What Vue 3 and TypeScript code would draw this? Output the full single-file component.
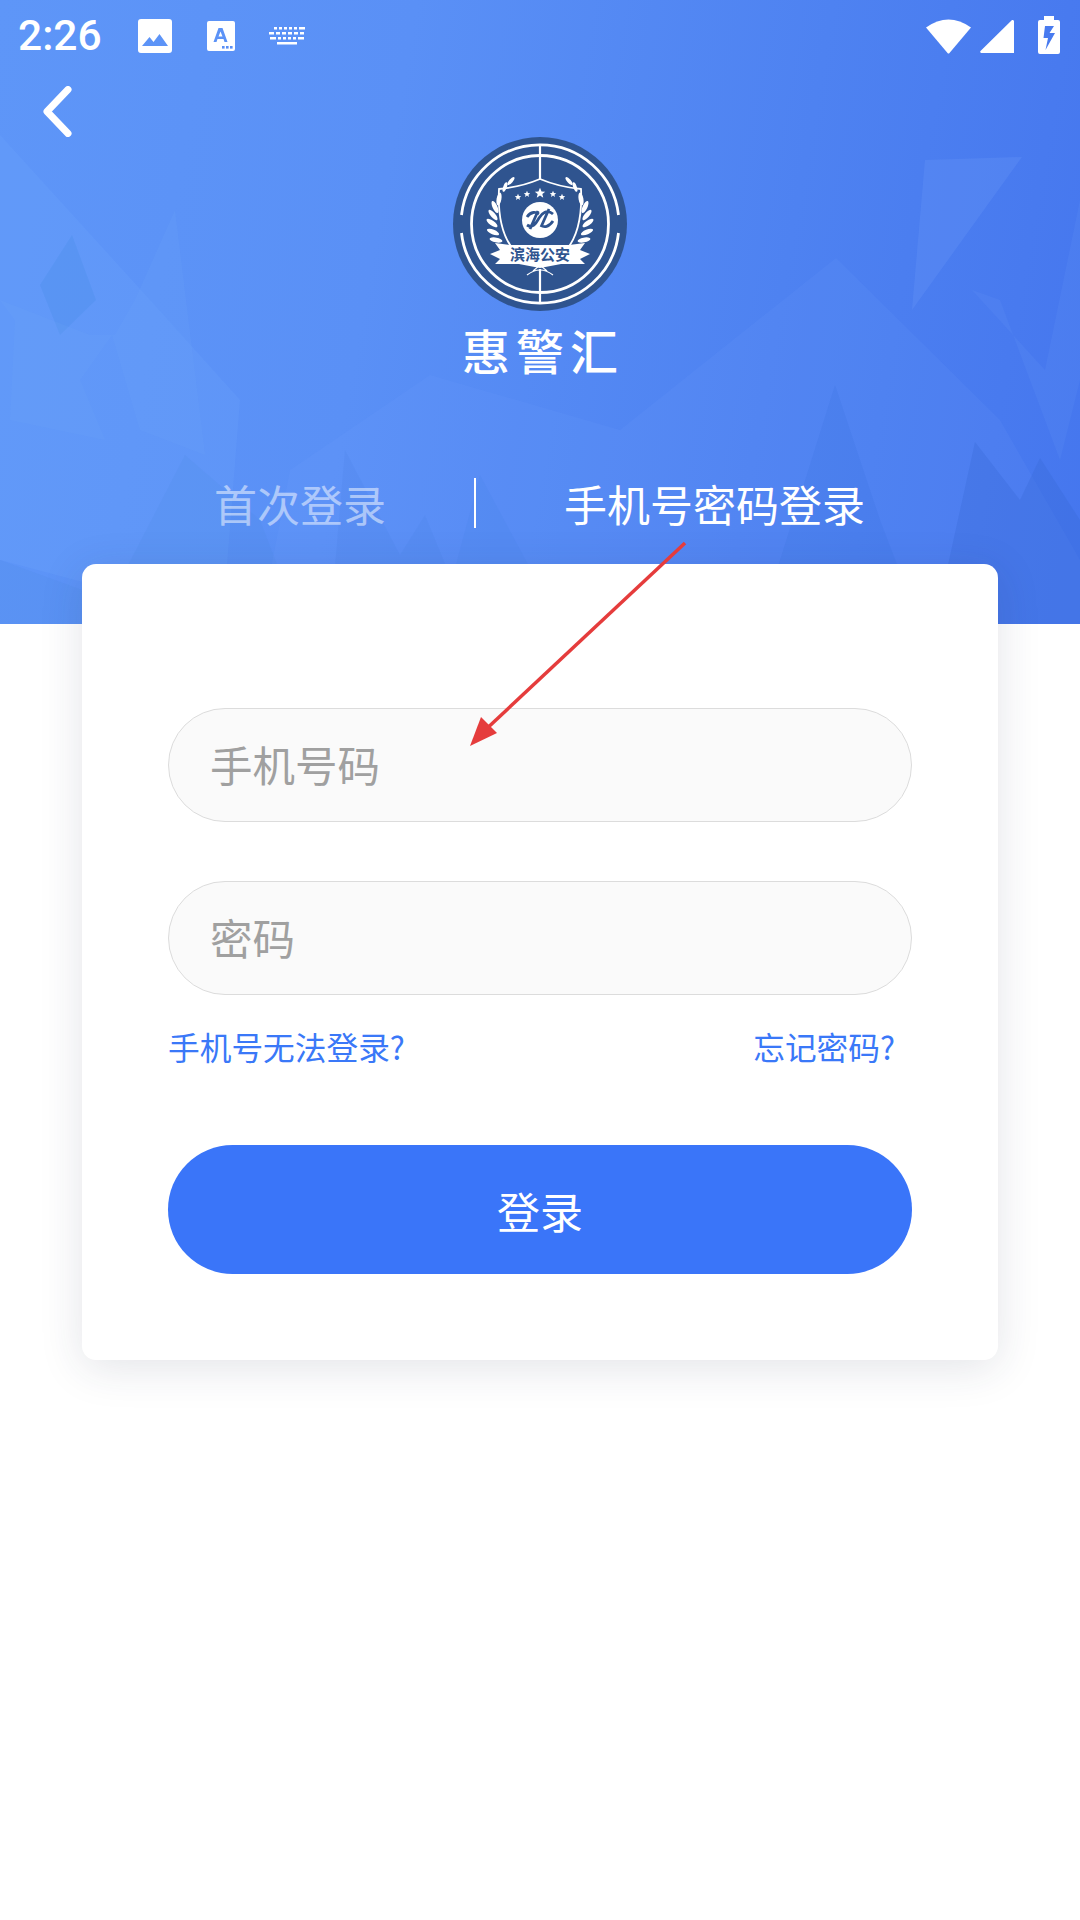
<script setup lang="ts">
interface Shard {
  points: string;
  fill: string;
}

// background shards of the header, in page pixels
const shards: Shard[] = [
  { points: "0,135 150,300 240,400 225,590 150,600 0,560", fill: "rgba(120,175,255,.16)" },
  { points: "40,285 72,235 96,300 60,335", fill: "rgba(70,140,230,.28)" },
  { points: "0,300 15,320 10,420 105,440 80,380 112,335 140,430 205,455 175,210 135,300 115,335 90,335", fill: "rgba(110,170,250,.14)" },
  { points: "185,455 260,520 300,624 0,624 0,560 110,600", fill: "rgba(75,140,230,.18)" },
  { points: "260,624 290,470 430,375 620,430 836,258 1000,420 1080,560 1080,624", fill: "rgba(115,165,255,.11)" },
  { points: "925,160 1022,157 912,310", fill: "rgba(130,175,255,.16)" },
  { points: "972,290 1045,370 1080,200 1080,380 1060,460 1000,300", fill: "rgba(130,175,255,.09)" },
  { points: "760,624 835,385 880,520 920,624", fill: "rgba(60,115,225,.22)" },
  { points: "935,624 975,442 1020,500 1040,458 1080,520 1080,624", fill: "rgba(55,105,215,.32)" },
  { points: "330,624 345,450 400,555 425,515 470,624", fill: "rgba(70,130,225,.18)" },
  { points: "480,475 560,624 440,624", fill: "rgba(70,125,225,.15)" }
];

const leaves = [
  { x: 46, y: 62, r: 100 },
  { x: 42, y: 70, r: 65 },
  { x: 40, y: 78, r: 50 },
  { x: 39, y: 86, r: 35 },
  { x: 40, y: 95, r: 22 },
  { x: 43, y: 103, r: 10 }
];

const stars = [
  { x: 65, y: 60, s: 0.8 },
  { x: 74, y: 57, s: 0.8 },
  { x: 87, y: 56, s: 1.3 },
  { x: 100, y: 57, s: 0.8 },
  { x: 109, y: 60, s: 0.8 }
];
</script>

<template>
  <div class="page">
    <header class="hero">
      <svg class="shards" viewBox="0 0 1080 624" preserveAspectRatio="none">
        <polygon v-for="(s, i) in shards" :key="i" :points="s.points" :fill="s.fill" />
      </svg>

      <div class="status">
        <span class="time">2:26</span>
        <svg class="ic-image" viewBox="0 0 34 34">
          <path fill="#fff" fill-rule="evenodd" d="M3 0h28a3 3 0 0 1 3 3v28a3 3 0 0 1-3 3H3a3 3 0 0 1-3-3V3a3 3 0 0 1 3-3zM4 27h26l-8.500-12-6 8-4-5z" />
        </svg>
        <svg class="ic-font" viewBox="0 0 28 30">
          <path fill="#fff" fill-rule="evenodd" d="M2 0h24a2 2 0 0 1 2 2v26a2 2 0 0 1-2 2H2a2 2 0 0 1-2-2V2a2 2 0 0 1 2-2zM11.500 7 6.500 21h3l1-3h6l1 3h3L15.500 7zM13.500 10.500l2 5h-4z" />
          <rect x="15" y="25" width="2.600" height="2.600" fill="#5a8ff5" />
          <rect x="19" y="25" width="2.600" height="2.600" fill="#5a8ff5" />
          <rect x="23" y="25" width="2.600" height="2.600" fill="#5a8ff5" />
        </svg>
        <svg class="ic-keys" viewBox="0 0 36 18" fill="#fff">
          <rect x="5" y="0" width="3" height="2.500" />
          <rect x="10" y="0" width="3" height="2.500" />
          <rect x="15" y="0" width="3" height="2.500" />
          <rect x="20" y="0" width="3" height="2.500" />
          <rect x="25" y="0" width="3" height="2.500" />
          <rect x="30" y="0" width="6" height="2.500" />
          <rect x="0" y="5" width="5" height="2.500" />
          <rect x="7" y="5" width="4" height="2.500" />
          <rect x="13" y="5" width="4" height="2.500" />
          <rect x="19" y="5" width="4" height="2.500" />
          <rect x="25" y="5" width="4" height="2.500" />
          <rect x="31" y="5" width="4" height="2.500" />
          <rect x="1" y="10" width="6" height="2.500" />
          <rect x="9" y="10" width="3" height="2.500" />
          <rect x="14" y="10" width="3" height="2.500" />
          <rect x="19" y="10" width="3" height="2.500" />
          <rect x="24" y="10" width="3" height="2.500" />
          <rect x="29" y="10" width="6" height="2.500" />
          <rect x="8" y="15" width="20" height="2.500" />
        </svg>
        <span class="status-gap"></span>
        <svg class="ic-wifi" viewBox="0 0 45 36">
          <path fill="#fff" d="M0 9.500Q22.500-6.500 45 9.500L23.500 35a1.400 1.400 0 0 1-2 0z" />
        </svg>
        <svg class="ic-signal" viewBox="0 0 34 33">
          <path fill="#fff" d="M32 0a1.500 1.500 0 0 1 2 1.500V33H1.500a1.200 1.200 0 0 1-1-2z" />
        </svg>
        <svg class="ic-battery" viewBox="0 0 22 38">
          <path fill="#fff" fill-rule="evenodd" d="M6 0h10v4h4a2 2 0 0 1 2 2v30a2 2 0 0 1-2 2H2a2 2 0 0 1-2-2V6a2 2 0 0 1 2-2h4zM7 10 5.500 22H10L7.500 34 17 17h-5.500L16 10z" />
        </svg>
      </div>

      <svg class="back" viewBox="0 0 29 51">
        <path d="M25 3.500 4 25.500 25 47.500" fill="none" stroke="#fff" stroke-width="7" stroke-linecap="round" stroke-linejoin="round" />
      </svg>

      <div class="brand">
        <svg class="logo" viewBox="0 0 174 174">
          <circle cx="87" cy="87" r="87" fill="#2f548f" />
          <g fill="none" stroke="#fff">
            <path stroke-width="2.800" d="M8.500 78A79 79 0 0 1 165.500 78M8.500 96A79 79 0 0 0 165.500 96" />
            <circle cx="87" cy="87" r="68.500" stroke-width="2.800" />
            <path stroke-width="2.200" d="M87 9V42M87 132V165" />
            <path stroke-width="1.800" d="M87 42Q68 50 46 52Q44 92 60 112M87 42Q106 50 128 52Q130 92 114 112" />
          </g>
          <g fill="#fff">
            <ellipse
              v-for="(l, i) in leaves"
              :key="'l' + i"
              :cx="l.x"
              :cy="l.y"
              rx="6.500"
              ry="2.400"
              :transform="`rotate(${l.r} ${l.x} ${l.y})`"
            />
            <ellipse
              v-for="(l, i) in leaves"
              :key="'r' + i"
              :cx="174 - l.x"
              :cy="l.y"
              rx="6.500"
              ry="2.400"
              :transform="`rotate(${-l.r} ${174 - l.x} ${l.y})`"
            />
            <ellipse cx="58" cy="44" rx="5" ry="1.800" transform="rotate(-50 58 44)" />
            <ellipse cx="116" cy="44" rx="5" ry="1.800" transform="rotate(50 116 44)" />
            <ellipse cx="52" cy="50" rx="5" ry="1.800" transform="rotate(-70 52 50)" />
            <ellipse cx="122" cy="50" rx="5" ry="1.800" transform="rotate(70 122 50)" />
            <path
              v-for="(s, i) in stars"
              :key="'s' + i"
              :transform="`translate(${s.x} ${s.y}) scale(${s.s})`"
              d="M0-4 1.200-1.200 4-1 1.800.8 2.500 3.600 0 2 -2.500 3.600-1.800.8-4-1-1.200-1.200z"
            />
            <path d="M42 106 58 108H116L132 106 127 113 137 117 127 122 132 127 108 127 87 131 66 127 42 127 47 122 37 117 47 113z" />
            <circle cx="87" cy="83" r="18" />
          </g>
          <path d="M74 88c6 4 9-2 12-7s8-9 14-4M74 80c4-6 9-5 12-3M88 88c3 3 8 2 12-4M85 74l-8 18M96 72l-8 18" fill="none" stroke="#2f548f" stroke-width="2.800" />
          <text x="87" y="123" class="logo-text" text-anchor="middle">滨海公安</text>
          <path d="M74 138Q87 128 100 138M80 134 87 128 94 134" fill="none" stroke="#fff" stroke-width="1.200" />
        </svg>
        <div class="brand-name">惠警汇</div>
      </div>

      <div class="tabs">
        <span class="tab tab-off">首次登录</span>
        <span class="tab-line"></span>
        <span class="tab">手机号密码登录</span>
      </div>
    </header>

    <main class="card">
      <div class="field">手机号码</div>
      <div class="field">密码</div>
      <div class="links">
        <span>手机号无法登录?</span>
        <span>忘记密码?</span>
      </div>
      <button class="submit" type="button">登录</button>
    </main>

    <!-- annotation drawn over the screenshot -->
    <svg class="arrow" viewBox="0 0 1080 1920">
      <line x1="685" y1="543" x2="482" y2="733" stroke="#e53c3c" stroke-width="3.500" />
      <polygon points="470,746 481,717 497,733" fill="#e53c3c" />
    </svg>
  </div>
</template>

<style scoped>
.page {
  position: relative;
  width: 1080px;
  height: 1920px;
  overflow: hidden;
  background: #fff;
  font-family: "Noto Sans CJK SC", "Noto Sans", sans-serif;
}

.hero {
  position: relative;
  height: 624px;
  display: flex;
  flex-direction: column;
  background: linear-gradient(100deg, #5e96f8 0%, #5a90f6 35%, #4e82f1 70%, #4576ee 100%);
}

.shards {
  position: absolute;
  inset: 0;
  width: 100%;
  height: 100%;
}

.status {
  position: relative;
  display: flex;
  align-items: center;
  height: 72px;
  padding: 0 20px 0 18px;
  color: #fff;
}

.status svg {
  flex: none;
}

.time {
  width: 84px;
  margin-right: 36px;
  font-family: Roboto, sans-serif;
  font-size: 42.500px;
  font-weight: 500;
  line-height: 72px;
}

.ic-image {
  width: 34px;
  height: 34px;
  margin-right: 35px;
}

.ic-font {
  width: 28px;
  height: 30px;
  margin-right: 34px;
}

.ic-keys {
  width: 36px;
  height: 18px;
}

.status-gap {
  flex: 1;
}

.ic-wifi {
  width: 45px;
  height: 36px;
  margin-right: 9px;
}

.ic-signal {
  width: 34px;
  height: 33px;
  margin: 1px 24px 0 0;
}

.ic-battery {
  width: 22px;
  height: 38px;
  margin-top: -3px;
}

.back {
  position: relative;
  width: 29px;
  height: 51px;
  margin: 14px 0 0 43px;
}

.brand {
  position: relative;
  display: flex;
  flex-direction: column;
  align-items: center;
}

.logo {
  width: 174px;
  height: 174px;
}

.brand-name {
  margin-top: 2px;
  padding-left: 6px;
  font-size: 48px;
  font-weight: 500;
  line-height: 72px;
  letter-spacing: 6px;
  color: #fff;
}

.logo-text {
  font-size: 15px;
  font-weight: 700;
  fill: #2f548f;
}

.tabs {
  position: relative;
  display: flex;
  align-items: center;
  margin-top: 93px;
  padding-left: 214px;
  height: 50px;
  color: #fff;
  font-size: 43px;
}

.tab {
  line-height: 50px;
  white-space: nowrap;
}

.tab-off {
  color: rgba(255, 255, 255, 0.5);
}

.tab-line {
  width: 2px;
  height: 50px;
  margin: 0 88px;
  background: #fff;
}

.card {
  position: relative;
  display: flex;
  flex-direction: column;
  width: 916px;
  box-sizing: border-box;
  margin: -60px 0 0 82px;
  padding: 144px 86px 86px;
  border-radius: 14px;
  background: #fff;
  box-shadow: 0 8px 44px rgba(40, 50, 80, 0.13);
}

.field {
  height: 114px;
  margin-bottom: 59px;
  padding-left: 41px;
  box-sizing: border-box;
  border: 1px solid #dcdcdc;
  border-radius: 57px;
  background: #fafafa;
  color: #a0a0a0;
  font-size: 42.500px;
  line-height: 110px;
}

.links {
  display: flex;
  justify-content: space-between;
  margin-top: -59px;
  padding: 28px 17px 0 0;
  color: #3a78f8;
  font-size: 31.700px;
  line-height: 46px;
}

.submit {
  height: 129px;
  margin-top: 76px;
  padding: 0;
  border: none;
  border-radius: 65px;
  background: #3a75f9;
  color: #fff;
  font-family: inherit;
  font-size: 43px;
}

.arrow {
  position: absolute;
  inset: 0;
  width: 1080px;
  height: 1920px;
  pointer-events: none;
}
</style>
